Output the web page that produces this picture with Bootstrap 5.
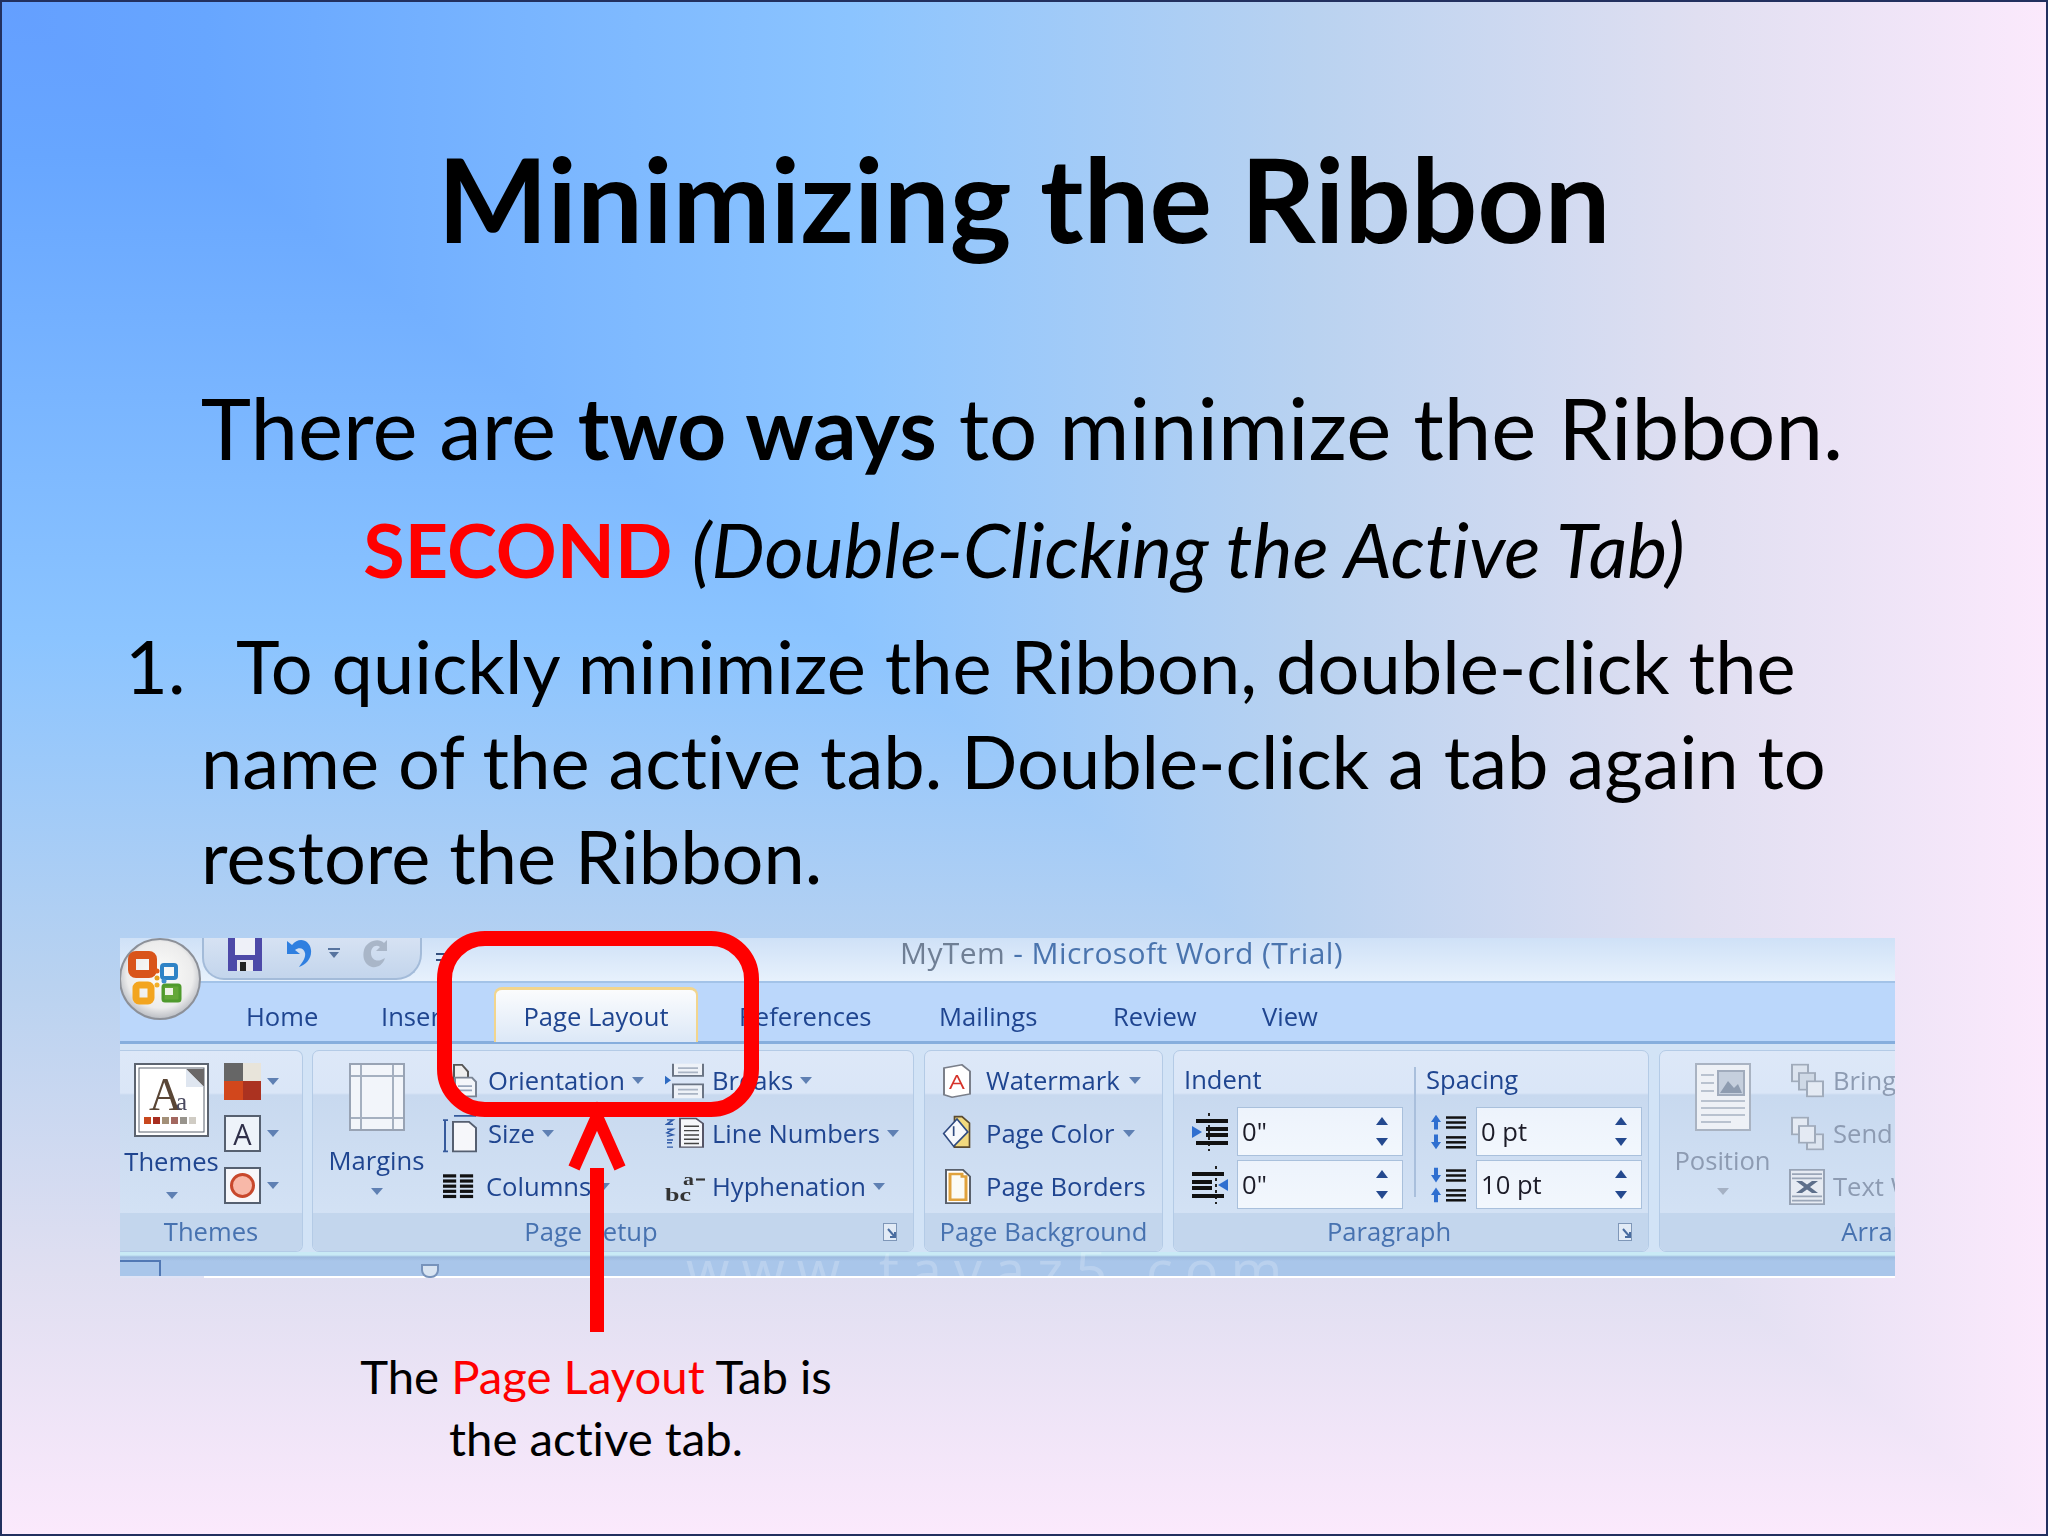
<!DOCTYPE html>
<html lang="en">
<head>
<meta charset="utf-8">
<title>Minimizing the Ribbon</title>
<link href="https://cdn.jsdelivr.net/npm/bootstrap@5.3.0/dist/css/bootstrap.min.css" rel="stylesheet">
<style>
body{margin:0;background:#fbe9fc}
.slide{position:relative;width:2048px;height:1536px;overflow:hidden;border:2px solid #22305f;
  font-family:"Lato","Open Sans",sans-serif;color:#000;font-variant-ligatures:none;
  --stops:#649fff 0,#67a6ff 10%,#8bc4ff 41.5%,#b9d2f0 64%,#e0dff1 83%,#fbe9fc 100%;
  background:linear-gradient(to bottom,var(--stops))}
.slide::before{content:"";position:absolute;inset:0;background:linear-gradient(to right,var(--stops));clip-path:polygon(0 0,100% 0,100% 100%)}
.slide>*{position:relative}
.ttl{font-size:117px;line-height:130px;margin:0;padding-top:131px;font-weight:700;text-align:center}
.l1{font-size:85.3px;line-height:100px;margin-top:114px;padding-right:4px}
.l2{font-size:75.5px;line-height:90px;margin-top:27px}
.l2 b{color:#f00}
.steps{margin:24px 0 0 0;padding:0 120px 0 199px;font-size:74px;line-height:95px;position:relative}
.num{margin-left:-76px;display:inline-block;width:111px}
/* ribbon */
.ribwrap{position:relative;margin:35px 0 0 118px;width:1775px;height:340px}
.rib{width:1775px;height:340px;overflow:hidden;position:relative;filter:blur(.55px);
  font-family:"Open Sans","Noto Sans",sans-serif;font-size:25.6px;line-height:30px;color:#1f4590;background:#d2e3f6}
.tbar{height:45px;background:linear-gradient(#cfe1f7,#e7f1fc);border-bottom:2px solid #a3c3e8;display:flex;align-items:flex-start;position:relative}
.qat{margin-left:82px;width:220px;height:42px;border:2px solid #a3bbd9;border-top:0;border-radius:0 0 26px 22px;background:linear-gradient(#d6e2f3,#c3d5ec);display:flex;gap:21px;padding-left:24px}
.tit{position:absolute;left:780px;top:0;line-height:30px;font-size:30px;letter-spacing:.4px;color:#4a74ae;white-space:nowrap}
.tit i{font-style:normal;color:#6f7f95}
.trow{height:61px;background:#bbd7fb;border-bottom:3px solid #86aedd;display:grid;grid-template-columns:135px 112px 246px 200px 174px 149px 80px;padding-left:126px;align-items:end;line-height:49px}
.acttab{width:204px;height:55px;margin-bottom:-1px;margin-left:1px;border:2px solid #f2d58d;border-bottom:0;border-top-width:3px;border-radius:8px 8px 0 0;background:linear-gradient(#fbfcfd,#dce8f7);text-align:center;line-height:54px}
.panel{height:208px;padding-top:6px;display:flex;gap:10px}
.grp{height:202px;flex:none;display:flex;flex-direction:column;border:1px solid #b4cbe6;border-radius:7px;overflow:hidden;background:linear-gradient(#dde8f8 0,#dae6f7 21%,#c8d9ef 22%,#d6e4f6 100%)}
.g1{width:183px;border-left:0;border-radius:0 7px 7px 0;margin-right:-1px}.g2{width:602px}.g3{width:239px}.g4{width:476px}.g5{width:460px}
.gbody{height:162px;display:flex}
.glab{height:40px;display:flex;align-items:center;background:#c3d6ed;color:#4772b0;line-height:38px}
.glab span{flex:1;text-align:center}
.laun{width:44px;display:flex;justify-content:flex-start;padding-left:14px}
.big{display:flex;flex-direction:column;align-items:center;padding-top:12px;flex:none;width:97px}
.big span{display:block;margin-top:15px}
.big svg{display:block;height:68px}
.big .cr{margin-top:12px}
.big .th{height:74px}
.big .sp{margin-top:10px}
.big .crt{margin-top:15px}
.big.b1{margin-left:3px}.big.b2{margin-left:15px}.big.b5{margin-left:14px}
.cr{display:inline-block;flex:none;width:0;height:0;border:6px solid transparent;border-top:7px solid #5f80b3;border-bottom:0}
.stack{display:grid;grid-auto-rows:53px;padding-top:3px;flex:none}
.itm{display:flex;align-items:center;white-space:nowrap}
.s2{margin-left:18px;width:222px}.s2 .itm{gap:11px}.s2 .cr{margin-left:-4px}
.s3 .itm{gap:7px}
.s4{padding-left:17px}.s4 .itm{gap:14px}.s4 .cr{margin-left:-5px}
.s5{margin-left:18px;color:#8d9bb2}.s5 .itm{gap:8px}
.dis{color:#8d9bb2}.dis .cr{border-top-color:#a5b1c4}
.sw{display:grid;grid-auto-rows:52px;padding-top:12px;margin-left:4px}
.sw div{display:flex;gap:6px;height:37px;align-items:center}
.pcol{padding:14px 0 0 10px}
.ph{height:30px;margin-bottom:12px}
.prow{display:flex;gap:7px;height:49px;margin-bottom:4px;align-items:center}
.prow.sg{gap:9px}
.inp{width:166px;height:49px;background:linear-gradient(#edf3fc,#f2f7fd);border:1px solid #a9c0dc;display:flex;justify-content:space-between;align-items:center;padding:0 14px 0 4px;color:#1c1c28}
.spn{display:grid;gap:13px}
.up,.dn{display:block;width:0;height:0;border:6px solid transparent}
.up{border-bottom:8px solid #24498f;border-top:0}.dn{border-top:8px solid #24498f;border-bottom:0}
.vsep{width:2px;height:130px;margin:16px 10px 0 11px;background:#a9bfdc;flex:none}
.rule{height:26px;background:linear-gradient(#c9eaf5 0,#c9eaf5 3px,#9dbade 5px,#a9c6ea 9px,#a9c6ea 24px,#fff 24px);position:relative;overflow:hidden}
.rule::after{content:"";position:absolute;left:0;bottom:0;width:84px;height:2px;background:#dfe3f5}
.wm{color:#fff;opacity:.2;font-size:56px;line-height:34px;text-align:left;padding-left:566px;letter-spacing:12px;white-space:nowrap}
.rulebox{position:absolute;left:0;top:8px;width:41px;height:20px;border:2px solid #5178b4;border-left:0;border-bottom:0}
.rulemk{position:absolute;left:301px;top:12px;width:18px;height:14px;background:#d8e4f2;border:2px solid #7793bb;border-radius:0 0 8px 8px}
.logo{position:absolute;left:-2px;top:0}
.qat .und{margin-right:-8px}.qat .drp{margin-top:10px}
.cust{margin-left:14px}
.redbox{position:absolute;left:317px;top:-7px;width:322px;height:186px;border:15px solid #f00;border-radius:48px}
.arrow{position:absolute;left:440px;top:170px;overflow:visible}
.note{width:520px;margin:67px 0 0 334px;text-align:center;font-size:47.3px;line-height:62px}
.note em{font-style:normal;color:#f00}
</style>
</head>
<body>
<main class="slide">
  <h1 class="ttl">Minimizing the Ribbon</h1>
  <p class="l1 text-center mb-0">There are <b>two ways</b> to minimize the Ribbon.</p>
  <p class="l2 text-center mb-0"><b>SECOND</b> <i>(Double-Clicking the Active Tab)</i></p>
  <p class="steps"><span class="num">1.</span>To quickly minimize the Ribbon, double-click the name of the active tab. Double-click a tab again to restore the Ribbon.</p>

  <section class="ribwrap">
    <div class="rib">
      <div class="tbar">
        <div class="qat">
          <svg width="34" height="33" viewBox="0 0 34 33"><rect width="34" height="33" fill="#4d49a8"/><rect x="7" y="0" width="20" height="17" fill="#eef0f8"/><rect x="9" y="22" width="16" height="11" fill="#e8e8ee"/><rect x="12" y="24" width="6" height="9" fill="#222"/></svg>
          <svg class="und" width="32" height="33" viewBox="0 0 32 33"><path d="M4 3v13h13l-5-4c4-3 9-2 10 3 1 5-3 10-6 14 7-2 13-9 12-17C27 2 16-2 9 7Z" fill="#2f7fe0"/></svg>
          <svg class="drp" width="12" height="12" viewBox="0 0 12 12"><rect y="0" width="12" height="2" fill="#57749f"/><path d="M1 4h10l-5 6z" fill="#57749f"/></svg>
          <svg width="30" height="33" viewBox="0 0 30 33"><path d="M26 2v11H15l4-4c-4-3-9 0-9 6 0 6 5 9 10 7l4-2c-2 7-8 10-13 9-7-2-10-9-8-17S17-1 23 5Z" fill="#a9b6c8"/></svg>
        </div>
        <svg class="mt-2 cust" width="10" height="26" viewBox="0 0 10 26"><path d="M0 8h10M0 14h10" stroke="#34507e" stroke-width="2"/></svg>
        <div class="tit"><i>MyTem</i> - Microsoft Word (Trial)</div>
      </div>
      <div class="trow">
        <div>Home</div><div>Insert</div><div><div class="acttab">Page Layout</div></div><div>References</div><div>Mailings</div><div>Review</div><div>View</div>
      </div>
      <div class="panel">
        <!-- Themes -->
        <div class="grp g1">
          <div class="gbody">
            <div class="big b1">
              <svg class="th" width="75" height="74" viewBox="0 0 75 74"><rect x="1" y="1" width="73" height="72" fill="#fff" stroke="#5c6470" stroke-width="2"/><rect x="5" y="5" width="65" height="64" fill="#fff" stroke="#5c6470" stroke-width="1"/><path d="M52 6h18v18z" fill="#6b6868"/><path d="M52 6l18 18H52z" fill="#dfe6f0"/><text x="15" y="47" font-family="Liberation Serif" font-size="46" fill="#5a4636">A</text><text x="42" y="47" font-family="Liberation Serif" font-size="25" fill="#4a4a60">a</text><g><rect x="10" y="54" width="7" height="7" fill="#c8481e"/><rect x="19" y="54" width="7" height="7" fill="#a82e20"/><rect x="28" y="54" width="7" height="7" fill="#a39078"/><rect x="37" y="54" width="7" height="7" fill="#a36860"/><rect x="46" y="54" width="7" height="7" fill="#98948c"/><rect x="55" y="54" width="7" height="7" fill="#d0ccc4"/></g></svg>
              <span class="sp">Themes</span><i class="cr crt"></i>
            </div>
            <div class="sw">
              <div><svg width="37" height="37" viewBox="0 0 37 37"><rect width="19" height="18" fill="#666"/><rect x="19" width="18" height="18" fill="#e8e4da"/><rect y="18" width="19" height="19" fill="#d2471c"/><rect x="19" y="18" width="18" height="19" fill="#ab3220"/></svg><i class="cr"></i></div>
              <div><svg width="37" height="37" viewBox="0 0 37 37"><rect x="1" y="1" width="35" height="35" fill="#eef3fa" stroke="#566070" stroke-width="2"/><text x="18.5" y="30" text-anchor="middle" font-family="Open Sans" font-size="29" fill="#30304a">A</text></svg><i class="cr"></i></div>
              <div><svg width="37" height="37" viewBox="0 0 37 37"><rect x="1" y="1" width="35" height="35" fill="#f7f7fa" stroke="#566070" stroke-width="2"/><circle cx="18.5" cy="18.5" r="11" fill="#f8b8a8" stroke="#c8482c" stroke-width="3"/></svg><i class="cr"></i></div>
            </div>
          </div>
          <div class="glab"><span>Themes</span></div>
        </div>
        <!-- Page Setup -->
        <div class="grp g2">
          <div class="gbody">
            <div class="big b2">
              <svg width="56" height="68" viewBox="0 0 56 68"><rect x="1" y="1" width="54" height="66" fill="#f2f5fa" stroke="#98a3b4" stroke-width="2"/><path d="M12 2v64M44 2v64M2 13h52M2 55h52" stroke="#a5b0c0" stroke-width="2" fill="none"/></svg>
              <span>Margins</span><i class="cr"></i>
            </div>
            <div class="stack s2">
              <div class="itm"><svg width="34" height="34" viewBox="0 0 34 40" preserveAspectRatio="none"><path d="M11 1h8l6 8v9H11z" fill="#eee" stroke="#555" stroke-width="2"/><path d="M12 16h17l4 5v17H12z" fill="#f4f6fa" stroke="#7a8494" stroke-width="2"/><path d="M15 26h14M15 31h14" stroke="#98a6bc" stroke-width="2"/></svg><span>Orientation</span><i class="cr"></i></div>
              <div class="itm"><svg width="34" height="38" viewBox="0 0 34 44" preserveAspectRatio="none"><path d="M2 6v36M0 6h5M0 42h5M11 1h22" stroke="#365a9c" stroke-width="2" fill="none"/><path d="M10 8h16l7 7v27H10z" fill="#f6f7fa" stroke="#555f70" stroke-width="2"/></svg><span>Size</span><i class="cr"></i></div>
              <div class="itm"><svg width="32" height="27" viewBox="0 0 34 42" preserveAspectRatio="none"><g fill="#111"><rect y="2" width="14" height="5"/><rect y="10" width="14" height="5"/><rect y="18" width="14" height="5"/><rect y="26" width="14" height="5"/><rect y="34" width="14" height="5"/><rect x="18" y="2" width="14" height="5"/><rect x="18" y="10" width="14" height="5"/><rect x="18" y="18" width="14" height="5"/><rect x="18" y="26" width="14" height="5"/><rect x="18" y="34" width="14" height="5"/></g></svg><span>Columns</span><i class="cr"></i></div>
            </div>
            <div class="stack s3">
              <div class="itm"><svg width="40" height="36" viewBox="0 0 40 42" preserveAspectRatio="none"><path d="M8 1v14h30V1" fill="#eef2f8" stroke="#6a7484" stroke-width="2"/><path d="M8 41V25h30v16" fill="#eef2f8" stroke="#6a7484" stroke-width="2"/><path d="M13 6h20M13 11h20M13 31h20M13 36h20" stroke="#a9b4c4" stroke-width="2"/><path d="M0 15l6 5-6 5z" fill="#2e6bc2"/></svg><span>Breaks</span><i class="cr"></i></div>
              <div class="itm"><svg width="40" height="33" viewBox="0 0 40 46" preserveAspectRatio="none"><path d="M2 4h6l-6 6h6M2 17h6l-6 5 6 3-6 2M2 32h6M2 36h5M2 42h6" stroke="#2f5aa8" stroke-width="2" fill="none"/><path d="M15 2h16l7 7v33H15z" fill="#f5f6fa" stroke="#556" stroke-width="2"/><path d="M19 13h15M19 19h15M19 25h15M19 31h15M19 37h15" stroke="#444" stroke-width="2"/></svg><span>Line Numbers</span><i class="cr"></i></div>
              <div class="itm"><svg width="40" height="30" viewBox="0 0 40 42" preserveAspectRatio="none"><text x="0" y="40" font-family="Liberation Serif" font-weight="700" font-size="26" fill="#333">bc</text><text x="18" y="18" font-family="Liberation Serif" font-weight="700" font-size="22" fill="#333">a</text><rect x="31" y="9" width="9" height="3" fill="#333"/></svg><span>Hyphenation</span><i class="cr"></i></div>
            </div>
          </div>
          <div class="glab"><span>Page Setup</span><div class="laun"><svg width="14" height="18" viewBox="0 0 14 18"><rect x=".5" y=".5" width="13" height="17" fill="#e2ebf6" stroke="#7f97b8"/><path d="M5 6l7 8M7 14h5V9" stroke="#4a6da0" stroke-width="2" fill="none"/></svg></div></div>
        </div>
        <!-- Page Background -->
        <div class="grp g3">
          <div class="gbody">
            <div class="stack s4">
              <div class="itm"><svg width="30" height="34" viewBox="0 0 30 42" preserveAspectRatio="none"><path d="M2 5l18-4 8 8v28l-18 4L2 38z" fill="#fff" stroke="#7a7f8a" stroke-width="2"/><text x="15" y="31" text-anchor="middle" font-family="Open Sans" font-size="25" fill="#d6332a">A</text></svg><span>Watermark</span><i class="cr"></i></div>
              <div class="itm"><svg width="30" height="37" viewBox="0 0 36 46" preserveAspectRatio="none"><path d="M15 40h18V10L24 2H15z" fill="#f2d97e" stroke="#5a4a30" stroke-width="2"/><path d="M2 23 18 5l13 16-17 18z" fill="#f6f8fc" stroke="#2f4a80" stroke-width="2"/><path d="M14 14v12" stroke="#2f4a80" stroke-width="2"/></svg><span>Page Color</span><i class="cr"></i></div>
              <div class="itm"><svg width="30" height="35" viewBox="0 0 30 42" preserveAspectRatio="none"><path d="M4 1h17l7 8v32H4z" fill="#fff" stroke="#59606b" stroke-width="2"/><path d="M8 6h12v3h4v28H8z" fill="#fbfbf5" stroke="#e0a23c" stroke-width="3"/></svg><span>Page Borders</span></div>
            </div>
          </div>
          <div class="glab"><span>Page Background</span></div>
        </div>
        <!-- Paragraph -->
        <div class="grp g4">
          <div class="gbody">
            <div class="pcol">
              <div class="ph">Indent</div>
              <div class="prow"><svg class="ms-2" width="38" height="38" viewBox="0 0 38 38"><path d="M17 0v38" stroke="#222" stroke-dasharray="3 3" stroke-width="2"/><g fill="#111"><rect x="4" y="6" width="32" height="4"/><rect x="14" y="14" width="22" height="4"/><rect x="14" y="20" width="22" height="4"/><rect x="4" y="28" width="32" height="4"/></g><path d="M0 13l10 6-10 6z" fill="#2f6fd0"/></svg><div class="inp"><span>0"</span><div class="spn"><i class="up"></i><i class="dn"></i></div></div></div>
              <div class="prow"><svg class="ms-2" width="38" height="38" viewBox="0 0 38 38"><path d="M24 0v38" stroke="#222" stroke-dasharray="3 3" stroke-width="2"/><g fill="#111"><rect x="0" y="6" width="32" height="4"/><rect x="0" y="14" width="20" height="4"/><rect x="0" y="20" width="20" height="4"/><rect x="0" y="28" width="32" height="4"/></g><path d="M36 13l-10 6 10 6z" fill="#2f6fd0"/></svg><div class="inp"><span>0"</span><div class="spn"><i class="up"></i><i class="dn"></i></div></div></div>
            </div>
            <div class="vsep"></div>
            <div class="pcol ps-0">
              <div class="ph">Spacing</div>
              <div class="prow sg"><svg class="ms-1" width="37" height="38" viewBox="0 0 37 46" preserveAspectRatio="none"><path d="M6 2 1 11h3v9h4v-9h3zM6 44l5-9H8v-9H4v9H1z" fill="#2f6fd0"/><g fill="#111"><rect x="16" y="4" width="20" height="3"/><rect x="16" y="10" width="20" height="3"/><rect x="16" y="16" width="20" height="3"/><rect x="16" y="28" width="20" height="3"/><rect x="16" y="34" width="20" height="3"/><rect x="16" y="40" width="20" height="3"/></g></svg><div class="inp"><span>0 pt</span><div class="spn"><i class="up"></i><i class="dn"></i></div></div></div>
              <div class="prow sg"><svg class="ms-1" width="37" height="38" viewBox="0 0 37 46" preserveAspectRatio="none"><path d="M6 20 1 11h3V2h4v9h3zM6 26l5 9H8v9H4v-9H1z" fill="#2f6fd0"/><g fill="#111"><rect x="16" y="4" width="20" height="3"/><rect x="16" y="10" width="20" height="3"/><rect x="16" y="16" width="20" height="3"/><rect x="16" y="28" width="20" height="3"/><rect x="16" y="34" width="20" height="3"/><rect x="16" y="40" width="20" height="3"/></g></svg><div class="inp"><span>10 pt</span><div class="spn"><i class="up"></i><i class="dn"></i></div></div></div>
            </div>
          </div>
          <div class="glab"><span>Paragraph</span><div class="laun"><svg width="14" height="18" viewBox="0 0 14 18"><rect x=".5" y=".5" width="13" height="17" fill="#e2ebf6" stroke="#7f97b8"/><path d="M5 6l7 8M7 14h5V9" stroke="#4a6da0" stroke-width="2" fill="none"/></svg></div></div>
        </div>
        <!-- Arrange -->
        <div class="grp g5">
          <div class="gbody">
            <div class="big dis b5">
              <svg width="56" height="68" viewBox="0 0 56 68"><rect x="1" y="1" width="54" height="66" fill="#eef1f6" stroke="#a9b3c2" stroke-width="2"/><rect x="23" y="8" width="26" height="24" fill="#c5cfdd" stroke="#a0abbc" stroke-width="2"/><path d="M25 30l8-12 6 7 4-4 4 9z" fill="#8e9cb0"/><path d="M6 12h13M6 20h13M6 28h13M6 38h44M6 45h44M6 52h44M6 59h30" stroke="#b9c2cf" stroke-width="2"/></svg>
              <span>Position</span><i class="cr"></i>
            </div>
            <div class="stack s5">
              <div class="itm"><svg width="36" height="35" viewBox="0 0 36 42" preserveAspectRatio="none"><rect x="3" y="2" width="16" height="20" fill="#dce4ef" stroke="#a0abbb" stroke-width="2"/><rect x="10" y="12" width="16" height="20" fill="#cfd9e6" stroke="#a0abbb" stroke-width="2"/><rect x="18" y="22" width="16" height="18" fill="#e4eaf3" stroke="#a0abbb" stroke-width="2"/></svg><span>Bring to Front</span></div>
              <div class="itm"><svg width="36" height="35" viewBox="0 0 36 42" preserveAspectRatio="none"><rect x="3" y="2" width="16" height="20" fill="#e4eaf3" stroke="#a0abbb" stroke-width="2"/><rect x="18" y="22" width="16" height="18" fill="#dce4ef" stroke="#a0abbb" stroke-width="2"/><rect x="10" y="12" width="16" height="20" fill="#e4eaf3" stroke="#a0abbb" stroke-width="2"/></svg><span>Send to Back</span></div>
              <div class="itm"><svg width="36" height="36" viewBox="0 0 36 42" preserveAspectRatio="none"><rect x="1" y="1" width="34" height="40" fill="#e6ebf3" stroke="#97a3b5" stroke-width="2"/><path d="M3 6h30M3 11h30M3 32h30M3 37h30" stroke="#9aa6b8" stroke-width="2"/><path d="M7 14l8 7-8 7h6l5-4 5 4h6l-8-7 8-7h-6l-5 4-5-4z" fill="#5d6f8b"/></svg><span>Text Wrapping</span></div>
            </div>
          </div>
          <div class="glab"><span>Arrange</span></div>
        </div>
      </div>
      <div class="rule">
        <div class="wm">www.tavaz5.com</div>
        <div class="rulebox"></div><div class="rulemk"></div>
      </div>
      <svg class="logo" width="84" height="84" viewBox="0 0 84 84">
        <defs><radialGradient id="orb" cx=".5" cy=".45" r=".55"><stop offset="0" stop-color="#fdfdfb"/><stop offset=".75" stop-color="#ececec"/><stop offset="1" stop-color="#b9bcc2"/></radialGradient></defs>
        <circle cx="42" cy="41" r="40" fill="url(#orb)" stroke="#8c9098" stroke-width="2"/>
        <rect x="14" y="17" width="21" height="19" rx="4" fill="none" stroke="#d9541a" stroke-width="8"/>
        <rect x="44" y="27" width="14" height="13" rx="2" fill="none" stroke="#2f83c6" stroke-width="4"/>
        <rect x="18" y="47" width="15" height="16" rx="3" fill="none" stroke="#f3a51f" stroke-width="7"/>
        <rect x="45" y="47" width="17" height="16" rx="2" fill="#64a738" stroke="#4f9a2c" stroke-width="3"/>
        <rect x="47" y="50" width="8" height="7" fill="#eef3e6"/>
        <circle cx="39" cy="33" r="2.5" fill="#e05a18"/><circle cx="39" cy="40" r="2.5" fill="#e5a020"/><circle cx="39" cy="47" r="2.5" fill="#f2b02a"/><circle cx="46" cy="43" r="2.5" fill="#3d8ecf"/>
      </svg>
    </div>
    <div class="redbox"></div>
    <svg class="arrow" width="120" height="230" viewBox="0 0 120 230">
      <path d="M14 60 37 8 60 60" fill="none" stroke="#f00" stroke-width="12" stroke-linejoin="miter"/>
      <rect x="30" y="60" width="14" height="164" fill="#f00"/>
    </svg>
  </section>
  <p class="note">The <em>Page Layout</em> Tab is<br>the active tab.</p>
</main>
<script src="https://cdn.jsdelivr.net/npm/bootstrap@5.3.0/dist/js/bootstrap.bundle.min.js"></script>
</body>
</html>
